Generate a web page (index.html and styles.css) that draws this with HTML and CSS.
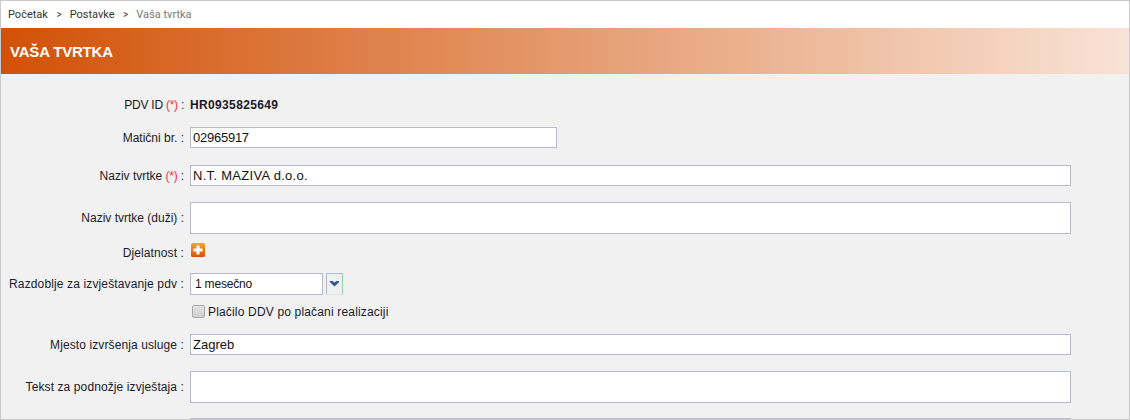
FILE: index.html
```html
<!DOCTYPE html>
<html lang="hr">
<head>
<meta charset="utf-8">
<title>Vaša tvrtka</title>
<link rel="stylesheet" href="styles.css">
</head>
<body>
<div class="frame">
  <nav class="crumbs">
    <a>Početak</a><span class="sep">&gt;</span><a>Postavke</a><span class="sep">&gt;</span><span class="current">Vaša tvrtka</span>
  </nav>
  <h1 class="title">VAŠA TVRTKA</h1>
  <form class="form">
    <div class="row row-pdv">
      <label class="lbl lbl-tight">PDV ID <span class="req">(*)</span> :</label>
      <strong class="val">HR0935825649</strong>
    </div>
    <div class="row row-mat">
      <label class="lbl lbl-plain">Matični br. :</label>
      <input class="inp inp-short" type="text" value="02965917">
    </div>
    <div class="row row-naziv">
      <label class="lbl lbl-plain">Naziv tvrtke <span class="req">(*)</span> :</label>
      <input class="inp inp-wide" type="text" value="N.T. MAZIVA d.o.o.">
    </div>
    <div class="row row-duzi">
      <label class="lbl lbl-plain">Naziv tvrtke (duži) :</label>
      <div class="inp area"></div>
    </div>
    <div class="row row-djel">
      <label class="lbl lbl-low">Djelatnost :</label>
      <svg class="plus" width="16" height="16" viewBox="0 0 16 16">
        <defs><linearGradient id="pg" x1="0" y1="0" x2="0" y2="1"><stop offset="0" stop-color="#f7a52c"/><stop offset="1" stop-color="#dc4f0c"/></linearGradient></defs>
        <rect x="1" y="1" width="14" height="14" rx="1.5" fill="url(#pg)"/>
        <path d="M6.500 3.500h3v3h3v3h-3v3h-3v-3h-3v-3h3z" fill="#fff"/>
      </svg>
    </div>
    <div class="row row-raz">
      <label class="lbl lbl-loose">Razdoblje za izvještavanje pdv :</label>
      <div class="inp sel">1 mesečno</div>
      <div class="selbtn">
        <svg width="9" height="6" viewBox="0 0 9 6"><path d="M0 0h2.500l2 1.600 2-1.600H9v1.200L4.500 5.500 0 1.200z" fill="#35568f"/></svg>
      </div>
    </div>
    <div class="row row-chk">
      <span class="box"></span>
      <span class="chk-text">Plačilo DDV po plačani realizaciji</span>
    </div>
    <div class="row row-mjesto">
      <label class="lbl">Mjesto izvršenja usluge :</label>
      <input class="inp" type="text" value="Zagreb">
    </div>
    <div class="row row-tekst">
      <label class="lbl">Tekst za podnožje izvještaja :</label>
      <div class="inp area"></div>
    </div>
    <div class="row row-next">
      <div class="inp next"></div>
    </div>
  </form>
</div>
</body>
</html>
```
FILE: styles.css
```css
* { box-sizing: border-box; }
html, body { margin: 0; padding: 0; height: 420px; overflow: hidden; }
body { font-family: "Liberation Sans", Arial, sans-serif; font-size: 12px; color: #1a1a2a; }
.frame {
  height: 420px;
  border: 1px solid #c9c9c9;
  background: #f1f1f1;
  overflow: hidden;
  display: flex;
  flex-direction: column;
}
.crumbs {
  height: 27px;
  flex: none;
  background: #fff;
  display: flex;
  align-items: center;
  padding: 0 0 1px 7px;
  font-family: Roboto, sans-serif;
  font-size: 11px;
  color: #333;
}
.sep { margin: 0 8px 0 8.500px; font-size: 10px; }
.current { color: #777; }
.title {
  flex: none;
  height: 46px;
  margin: 0;
  padding: 1px 0 0 9px;
  display: flex;
  align-items: center;
  color: #fff;
  font-size: 15px;
  font-weight: bold;
  letter-spacing: -.2px;
  background: linear-gradient(to right, #d25106, #f8e3d6);
}
.form { padding-top: 21px; flex: 1; }
.row { display: flex; align-items: center; }
.lbl { width: 183px; margin-right: 6px; flex: none; text-align: right; letter-spacing: .1px; }
.lbl-tight { letter-spacing: -.22px; }
.lbl-plain { letter-spacing: 0; }
.lbl-loose { letter-spacing: .13px; }
.lbl-low { position: relative; top: 2px; }
.req { color: #e33; letter-spacing: -.3px; }
.val { font-weight: bold; letter-spacing: .35px; }
.inp {
  height: 21px;
  flex: none;
  width: 881px;
  margin: 0;
  padding: 0 2px;
  border: 1px solid #b8b9cc;
  border-radius: 0;
  background: #fff;
  font-family: "Liberation Sans", Arial, sans-serif;
  font-size: 13px;
  color: #111;
  outline: 0;
}
.inp-short { width: 367px; letter-spacing: -.25px; }
.inp-wide { letter-spacing: .3px; }
.area { height: 32px; }
.row-pdv { height: 18px; padding-top: 2px; }
.row-mat { margin-top: 14px; }
.row-naziv { margin-top: 17px; }
.row-duzi { margin-top: 16px; }
.row-djel { margin-top: 8px; height: 18px; }
.row-raz { margin-top: 13px; }
.sel { width: 133px; height: 22px; padding-left: 4px; display: flex; align-items: center; font-size: 12px; letter-spacing: -.2px; }
.selbtn {
  width: 17px;
  height: 22px;
  margin-left: 3px;
  display: flex;
  align-items: center;
  justify-content: center;
  border: 1px solid #b8b9cc;
  border-right-color: #8fd6ac;
  border-bottom-color: #e4e4e4;
  background: #f0f0f0;
}
.plus { margin-top: -3px; }
.row-chk { margin-top: 9px; height: 14px; padding-left: 191px; }
.box {
  width: 13px;
  height: 13px;
  flex: none;
  border: 1px solid #aaa;
  border-radius: 2px;
  background: linear-gradient(#e4e4e4, #cfcfcf);
}
.chk-text { margin-left: 3px; letter-spacing: .17px; position: relative; top: 1px; }
.row-mjesto { margin-top: 16px; }
.row-tekst { margin-top: 16px; }
.row-next { margin-top: 15px; padding-left: 189px; }
.next { height: 21px; }
```
